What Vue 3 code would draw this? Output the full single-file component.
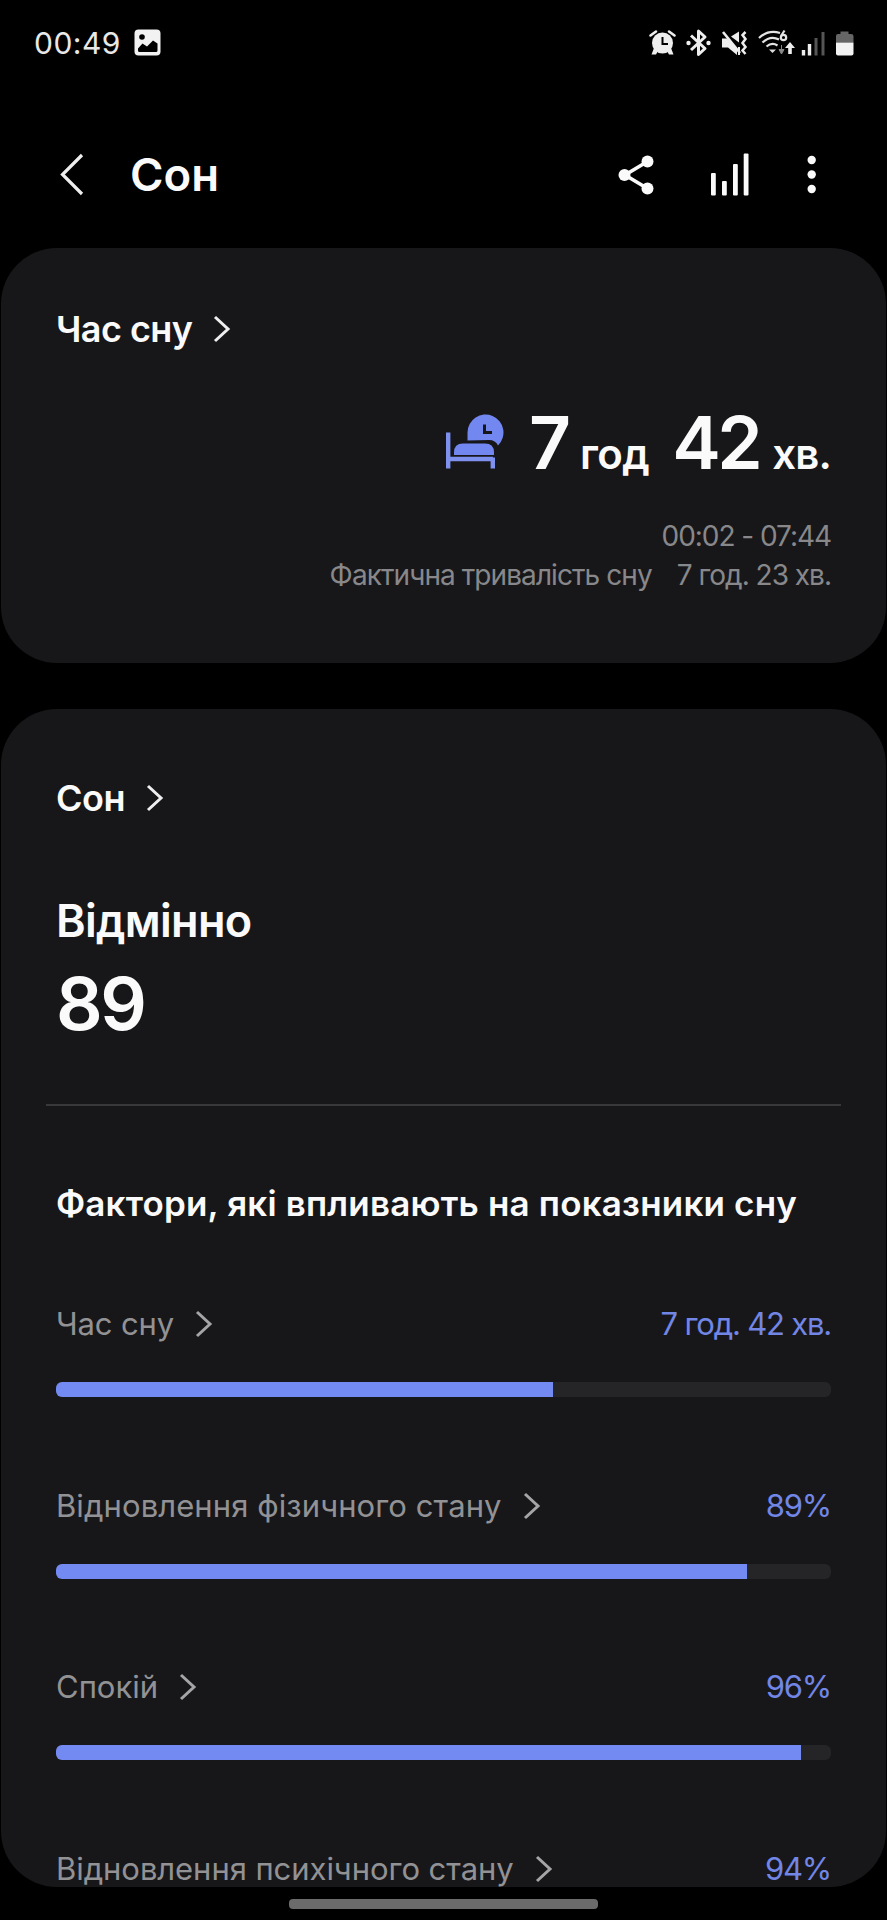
<script setup>
const factors = [
  { label: 'Час сну', value: '7 год. 42 хв.', fill: 64.1, cls: 'f-time' },
  { label: 'Відновлення фізичного стану', value: '89%', fill: 89.1, cls: 'f-body' },
  { label: 'Спокій', value: '96%', fill: 96.1, cls: 'f-calm' },
  { label: 'Відновлення психічного стану', value: '94%', fill: 94, cls: 'f-mind' }
]
</script>

<template>
  <main class="screen">
    <div class="status">
      <span class="clock">00:49</span>
      <svg class="photo" width="27" height="27" viewBox="0 0 27 27">
        <rect x="0.5" y="0.5" width="26" height="26" rx="4" fill="#f2f2f2" />
        <circle cx="8" cy="8" r="2.8" fill="#000" />
        <path d="M4 19.5 8.5 14.5 13 17.5 19 11.5 23.5 14.5V21.5Q23.5 23 22 23H5.500Q4 23 4 21.500Z" fill="#000" />
      </svg>
      <svg class="tray" width="210" height="30" viewBox="0 0 210 30">
        <g fill="#eee">
          <circle cx="14.500" cy="15" r="10.500" />
          <path d="M6 20 3.500 26.500H8L10 23ZM23 20 25.500 26.500H21L19 23Z" />
          <path d="M2.500 7.500 8 3.500M26.500 7.500 21 3.500" stroke="#eee" stroke-width="2.600" stroke-linecap="round" />
          <path d="M14.500 9V16H20" fill="none" stroke="#000" stroke-width="2" />
        </g>
        <path d="M43 7.500 57 20.500 50.500 26.500V3L57 9 43 22" fill="none" stroke="#eee" stroke-width="3" stroke-linejoin="round" />
        <circle cx="40.500" cy="15" r="2.200" fill="#eee" /><circle cx="60.500" cy="15" r="2.200" fill="#eee" />
        <path d="M74 10.500H79L89 20V27L80 19.500H74ZM83 8.500 91 3.500V14.500Z" fill="#eee" />
        <path d="M75 4 92 25" stroke="#eee" stroke-width="2.600" />
        <path d="M97.500 4 94.500 7 97.500 11 94.500 15 97.500 19 94.500 22.500 97.500 26" fill="none" stroke="#eee" stroke-width="2.500" />
        <path d="M91 19V27" stroke="#eee" stroke-width="2" />
        <g fill="none" stroke="#e4e4e4" stroke-width="2.200">
          <path d="M111 10Q120 1.500 132 5M114.500 14.500Q122.500 7 131 11.500M118.500 18.500Q124 14 129.500 17.500" />
          <circle cx="135.500" cy="9.500" r="2.700" /><path d="M133 8 136.500 2.500" />
        </g>
        <path d="M121 21.500H128L124.500 25Z" fill="#ddd" />
        <path d="M133.500 17V22M131 21.500H136L133.500 26Z" fill="#888" stroke="#888" />
        <path d="M137 20 142 14 147 20H143.800V26H140.200V20Z" fill="#eee" />
        <path d="M155.500 22V27.500M161.500 16V27.500" stroke="#eee" stroke-width="3.400" />
        <path d="M168 10V27.500M175 4V27.500" stroke="#555" stroke-width="3" />
        <path d="M188 14.500V8Q188 6 190 6H192.500V3.500H200.500V6H203Q205.500 6 205.500 8V14.500Z" fill="#666" />
        <path d="M188 14.500H205.500V25.500Q205.500 27.500 203.500 27.500H190Q188 27.500 188 25.500Z" fill="#f2f2f2" />
      </svg>
    </div>

    <header class="top">
      <svg class="back" width="26" height="46" viewBox="0 0 26 46">
        <path d="M23 3 3.500 22.500 23 42" fill="none" stroke="#eee" stroke-width="3.200" />
      </svg>
      <h1>Сон</h1>
      <svg class="actions" width="210" height="50" viewBox="0 0 210 50">
        <path d="M30.500 11.500 8 25 30.500 38.500" fill="none" stroke="#fafafa" stroke-width="3.600" />
        <g fill="#fafafa">
          <circle cx="30.500" cy="11.500" r="6" /><circle cx="7.500" cy="25" r="6" /><circle cx="30.500" cy="38.500" r="6" />
          <rect x="94" y="23" width="4.800" height="22.500" rx="1" /><rect x="105" y="31" width="4.800" height="14.500" rx="1" />
          <rect x="116" y="14" width="4.800" height="31.500" rx="1" /><rect x="126.700" y="3.500" width="4.800" height="42" rx="1" />
          <circle cx="194.700" cy="10" r="4.200" /><circle cx="194.700" cy="24.500" r="4.200" /><circle cx="194.700" cy="39" r="4.200" />
        </g>
      </svg>
    </header>

    <section class="card duration">
      <h2 class="link">
        <span class="t-duration">Час сну</span>
        <svg width="18" height="28" viewBox="0 0 18 28"><path d="M2 2 15 14 2 26" /></svg>
      </h2>
      <div class="amount">
        <svg class="bed" width="60" height="60" viewBox="0 0 60 60">
          <path d="M23.500 29V21A18 18 0 1 1 54 34Q51.500 28.500 45 28.500Z" fill="#7287f0" />
          <path d="M40.500 13V21H48" fill="none" stroke="#17171a" stroke-width="3" />
          <path d="M10 43.500V41Q10 32 19 32H41Q50 32 50 41V43.500Z" fill="#7287f0" />
          <path d="M4.200 21V57M4 47.500H49M48.800 46V57" fill="none" stroke="#7f91ee" stroke-width="4.400" />
        </svg>
        <span class="big seven">7</span><span class="unit hours">год</span>
        <span class="big minutes">42</span><span class="unit mins">хв.</span>
      </div>
      <p class="range">00:02 - 07:44</p>
      <p class="actual"><span class="a-label">Фактична тривалість сну</span><span class="a-value">7 год. 23 хв.</span></p>
    </section>

    <section class="card score">
      <h2 class="link">
        <span class="t-score">Сон</span>
        <svg width="18" height="28" viewBox="0 0 18 28"><path d="M2 2 15 14 2 26" /></svg>
      </h2>
      <p class="grade">Відмінно</p>
      <p class="points">89</p>
      <div class="rule"></div>
      <h3>Фактори, які впливають на показники сну</h3>
      <div v-for="f in factors" :key="f.label" class="factor">
        <div class="row">
          <span :class="f.cls">{{ f.label }}</span>
          <svg width="18" height="28" viewBox="0 0 18 28"><path d="M2 2 15 14 2 26" /></svg>
          <span class="val">{{ f.value }}</span>
        </div>
        <div class="bar"><div class="fill" :style="{ width: f.fill + '%' }"></div></div>
      </div>
    </section>
    <div class="home"></div>
  </main>
</template>

<style>
body { background: #000; }
</style>

<style scoped>
.screen { width: 887px; height: 1920px; box-sizing: border-box; background: #000; overflow: hidden; display: flex; flex-direction: column; font-family: Inter, "Noto Sans", sans-serif; color: #fafafa; }
.screen > * { flex: none; }
h1, h2, h3, p { margin: 0; white-space: nowrap; }
svg { display: block; flex: none; }
span { white-space: nowrap; }
.status { height: 85px; display: flex; align-items: center; padding: 0 29px 0 34px; box-sizing: border-box; }
.clock { font-size: 30px; letter-spacing: 0.5px; color: #e8e8e8; }
.photo { margin-left: 13px; }
.tray { margin-left: auto; }
.top { height: 163px; box-sizing: border-box; padding: 16px 60px 0 59px; display: flex; align-items: center; }
h1 { font-size: 45.5px; font-weight: 600; line-height: 54px; margin-left: 45px; }
.actions { margin-left: auto; }
.card { background: #17171a; border-radius: 56px; margin: 0 1px; box-sizing: border-box; padding: 0 55px; }
.duration { height: 415px; padding-top: 59px; }
.link { display: flex; align-items: center; height: 44px; line-height: 44px; font-size: 36px; font-weight: 600; }
.t-duration { letter-spacing: -0.55px; }
.t-score { letter-spacing: -0.5px; }
.link svg, .row svg { margin-left: 21px; fill: none; stroke: #eee; stroke-width: 3; }
.amount { display: flex; justify-content: flex-end; align-items: baseline; height: 90px; line-height: 90px; margin-top: 47px; font-weight: 600; }
.bed { margin-right: 25px; align-self: center; transform: translateY(-1.5px); }
.big { font-size: 73px; }
.unit { font-size: 42px; margin-left: 10px; letter-spacing: -0.6px; }
.seven { letter-spacing: -1px; }
.minutes { margin-left: 23px; letter-spacing: -3.5px; }
.mins { margin-left: 13px; letter-spacing: -0.9px; }
.range, .actual { font-size: 28px; line-height: 39px; color: #88888b; text-align: right; letter-spacing: -1.05px; }
.range { margin-top: 29px; }
.a-label { letter-spacing: -0.92px; }
.a-value { margin-left: 25px; letter-spacing: -1px; }
.score { height: 1178px; margin-top: 46px; padding-top: 67px; overflow: hidden; }
.grade { font-size: 45px; line-height: 54px; font-weight: 600; margin-top: 74px; letter-spacing: -0.7px; }
.points { font-size: 73px; line-height: 90px; font-weight: 600; margin-top: 11px; letter-spacing: -2.5px; }
.rule { height: 2px; background: #38383b; margin: 55px -10px 0; }
h3 { font-size: 35px; line-height: 44px; font-weight: 600; margin-top: 75px; margin-bottom: 79px; letter-spacing: 0.18px; }
.factor { height: 181.7px; }
.row { height: 40px; display: flex; align-items: center; font-size: 31px; line-height: 40px; color: #929295; }
.row svg { stroke: #a5a5a8; }
.f-time { letter-spacing: -0.15px; }
.f-body { letter-spacing: 0.09px; }
.f-mind { letter-spacing: -0.06px; }
.val { margin-left: auto; color: #7286e6; letter-spacing: -1.2px; }
.bar { height: 15px; margin-top: 38px; border-radius: 6px; background: #252527; overflow: hidden; }
.fill { height: 100%; background: #738af2; }
.home { width: 309px; height: 10px; border-radius: 4px; background: #6b6b6b; margin: 12px auto 0; }
</style>
